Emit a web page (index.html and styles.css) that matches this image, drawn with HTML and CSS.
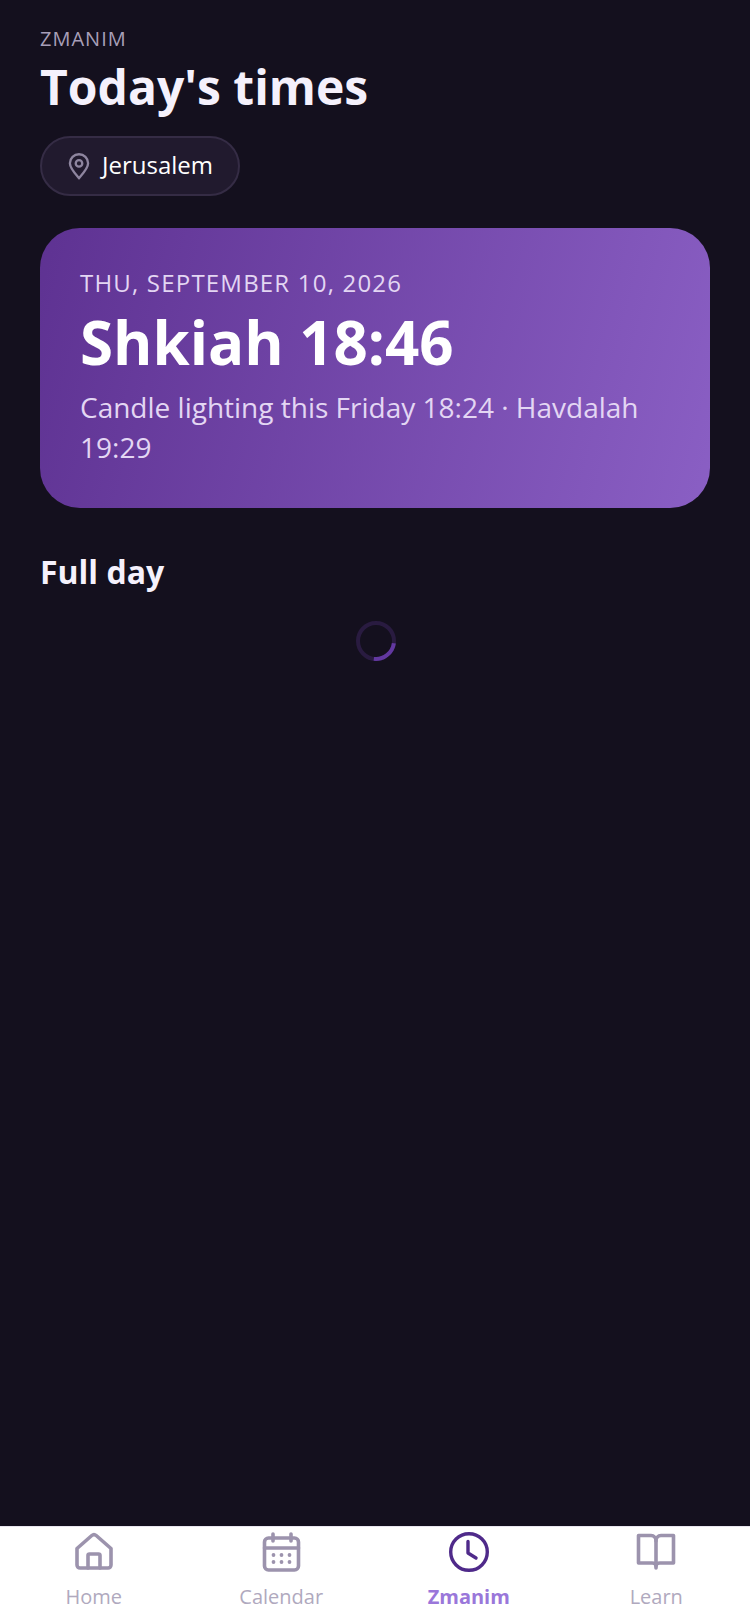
FILE: index.html
```html
<!DOCTYPE html>
<html lang="en">
<head>
  <meta charset="UTF-8">
  <meta name="viewport" content="width=device-width, initial-scale=1.0">
  <title>Zmanim</title>
  <link rel="stylesheet" href="styles.css">
</head>
<body>
  <main class="content">
    <p class="eyebrow">ZMANIM</p>
    <h1 class="title">Today's times</h1>
    <div class="chip">
      <svg class="chip-icon" viewBox="0 0 24 24" fill="none" stroke="currentColor" stroke-width="2" stroke-linecap="round" stroke-linejoin="round">
        <path d="M12 22.500c-1-1.300-7.800-8.200-7.800-12.800a7.800 7.800 0 0 1 15.600 0c0 4.600-6.800 11.500-7.800 12.800z"/>
        <circle cx="12" cy="9.800" r="2.800"/>
      </svg>
      <span class="chip-label">Jerusalem</span>
    </div>

    <section class="hero">
      <p class="hero-date">THU, SEPTEMBER 10, 2026</p>
      <p class="hero-time">Shkiah 18:46</p>
      <p class="hero-note">Candle lighting this Friday 18:24 · Havdalah 19:29</p>
    </section>

    <h2 class="section-title">Full day</h2>
    <div class="spinner-row"><div class="spinner"></div></div>
  </main>

  <nav class="tabs">
    <a class="tab">
      <svg class="tab-icon" viewBox="0 0 40 40" fill="none" stroke="currentColor" stroke-width="3.600" stroke-linecap="round" stroke-linejoin="round">
        <path d="M3 16.500 17.800 3.500a3.300 3.300 0 0 1 4.400 0L37 16.500V33a3 3 0 0 1-3 3H6a3 3 0 0 1-3-3z"/>
        <path d="M14 36V23.500a1.500 1.500 0 0 1 1.500-1.500h9a1.500 1.500 0 0 1 1.500 1.500V36"/>
      </svg>
      <span>Home</span>
    </a>
    <a class="tab">
      <svg class="tab-icon" viewBox="0 0 40 40" fill="none" stroke="currentColor" stroke-width="3.600" stroke-linecap="round" stroke-linejoin="round">
        <rect x="3.500" y="6" width="34" height="32" rx="4"/>
        <path d="M3.500 16h34M12 2v7M30 2v7"/>
        <g fill="currentColor" stroke="none">
          <circle cx="12.500" cy="23" r="1.900"/><circle cx="20.500" cy="23" r="1.900"/><circle cx="28.500" cy="23" r="1.900"/>
          <circle cx="12.500" cy="30" r="1.900"/><circle cx="20.500" cy="30" r="1.900"/><circle cx="28.500" cy="30" r="1.900"/>
        </g>
      </svg>
      <span>Calendar</span>
    </a>
    <a class="tab tab-active">
      <svg class="tab-icon" viewBox="0 0 40 40" fill="none" stroke="currentColor" stroke-width="3.400" stroke-linecap="round" stroke-linejoin="round">
        <circle cx="20" cy="20" r="18.300"/>
        <path d="M19 9.500V21l8 5"/>
      </svg>
      <span>Zmanim</span>
    </a>
    <a class="tab">
      <svg class="tab-icon" viewBox="0 0 40 40" fill="none" stroke="currentColor" stroke-width="3.600" stroke-linecap="round" stroke-linejoin="round">
        <path d="M20 9c0-3-2-5.500-5-5.500H2.500V31H16c2.500 0 4 1 4 3 0-2 1.500-3 4-3h13.500V3.500H25c-3 0-5 2.500-5 5.500z"/>
        <path d="M20 9v27"/>
      </svg>
      <span>Learn</span>
    </a>
  </nav>
</body>
</html>
```

FILE: styles.css
```css
* { box-sizing: border-box; margin: 0; padding: 0; font-family: 'Open Sans', sans-serif; }
body { background: #14101e; width: 750px; height: 1624px; display: flex; flex-direction: column; overflow: hidden; }

.content { flex: 1; padding: 28px 40px 0; }
.eyebrow { font-size: 20px; line-height: 22px; letter-spacing: 1px; color: #a79fb8; }
.title { font-size: 48px; line-height: 64px; font-weight: 700; color: #f5f1fc; margin-top: 5px; }

.chip { display: inline-flex; align-items: center; gap: 9px; height: 60px; margin-top: 17px; padding: 0 25px 0 23px; background: #211a2e; border: 2px solid #352c45; border-radius: 30px; color: #fff; font-size: 24px; }
.chip-icon { width: 28px; height: 28px; color: #8e859f; }
.chip-label { padding-bottom: 4px; }

.hero { margin-top: 32px; padding: 39px 40px 0; height: 280px; border-radius: 40px; background: linear-gradient(105deg, #5e3292, #8a5fc4); }
.hero-date { font-size: 24px; line-height: 32px; letter-spacing: 1.2px; color: #e3d6f3; }
.hero-time { font-size: 60px; line-height: 78px; font-weight: 700; color: #fff; margin-top: 4px; }
.hero-note { font-size: 28px; line-height: 40px; color: #e3d6f3; margin-top: 5.600px; }

.section-title { font-size: 32px; line-height: 40px; font-weight: 700; color: #f5f1fc; margin-top: 44px; }
.spinner-row { display: flex; justify-content: center; margin-top: 29px; padding-left: 2px; }
.spinner { width: 40px; height: 40px; border: 4px solid #291b40; border-radius: 50%; position: relative; }
.spinner::after { content: ""; position: absolute; inset: -4px; border-radius: 50%; border: 4px solid transparent; border-right-color: #6238a0; transform: rotate(52deg); }

.tabs { display: grid; grid-template-columns: repeat(4, 1fr); height: 98px; background: #fff; border-top: 1px solid #e9e6ef; padding-top: 5px; }
.tab { display: flex; flex-direction: column; align-items: center; color: #9c93ad; }
.tab-icon { width: 40px; height: 40px; }
.tab span { font-size: 20px; line-height: 27px; margin-top: 11px; color: #b0a9be; }
.tab-active { color: #4f2a8a; }
.tab-active span { font-weight: 700; color: #9a77da; }
```
